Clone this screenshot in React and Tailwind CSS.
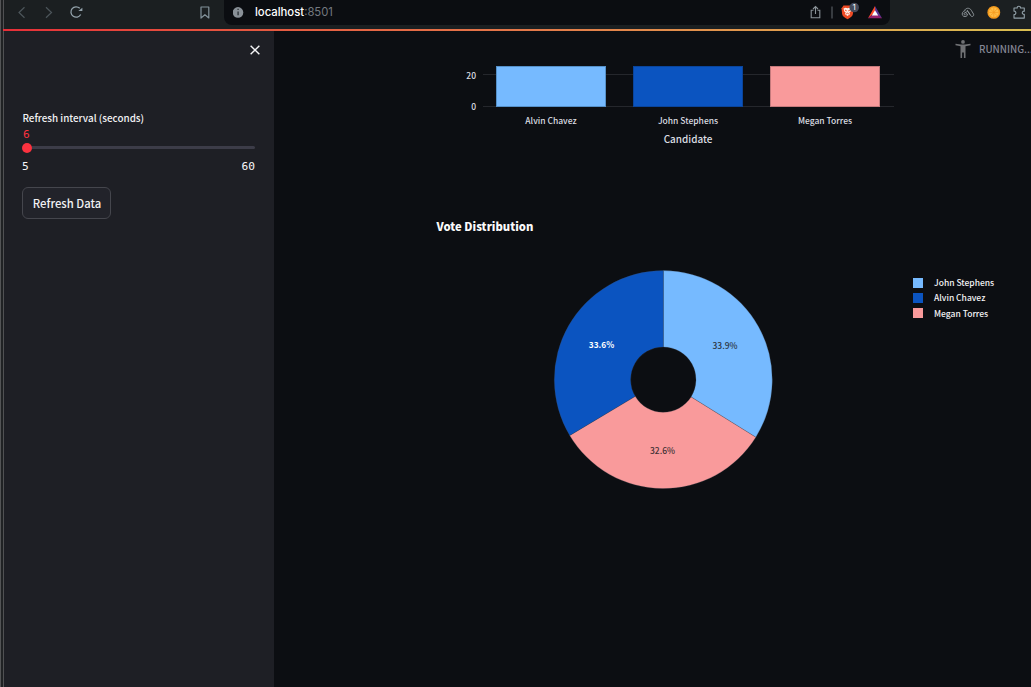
import React from "react";

const SANS = "font-['Noto_Sans_CJK_SC',sans-serif]";

const CANDIDATES = [
  { name: "Alvin Chavez", x: 66.5, fill: "#76baff", stroke: "#5590c8" },
  { name: "John Stephens", x: 203.5, fill: "#0b54c0", stroke: "#0a459c" },
  { name: "Megan Torres", x: 340.5, fill: "#f99a9b", stroke: "#c57a7c" },
];

const SLICES = [
  { label: "33.9%", value: 33.9, fill: "#76baff", text: "#2b3442", x: 725, y: 349 },
  { label: "32.6%", value: 32.6, fill: "#f99a9b", text: "#403034", x: 662.5, y: 454 },
  { label: "33.6%", value: 33.6, fill: "#0b54c0", text: "#ffffff", x: 601.5, y: 348.3, bold: true },
];

const LEGEND = [
  { name: "John Stephens", color: "bg-[#76baff]" },
  { name: "Alvin Chavez", color: "bg-[#0b54c0]" },
  { name: "Megan Torres", color: "bg-[#f99a9b]" },
];

function ringSlice(cx, cy, outer, inner, from, to) {
  const at = (r, a) => `${cx + r * Math.sin(a)} ${cy - r * Math.cos(a)}`;
  return `M${at(outer, from)} A${outer} ${outer} 0 0 1 ${at(outer, to)} L${at(inner, to)} A${inner} ${inner} 0 0 0 ${at(inner, from)} Z`;
}

function BrowserBar() {
  return (
    <div className="flex h-[29px] shrink-0 items-start bg-[#1b1f21] pl-[11px]">
      <svg className="h-[25px] w-[209px] shrink-0" viewBox="15 0 209 25" fill="none">
        <path d="M24.5 7.3 19 12.5l5.500 5.200M46 7.300l5.500 5.200L46 17.700" stroke="#4c555a" strokeWidth="1.200" />
        <path d="M79.800 8.300A5.200 5.200 0 1 0 80.700 14.500" stroke="#94a3ac" strokeWidth="1.300" />
        <path d="M78.300 10.900h4.100V7.700z" fill="#94a3ac" />
        <path d="M201 7h7.800v11l-3.900-3.300L201 18z" stroke="#82919a" strokeWidth="1.200" strokeLinejoin="round" />
      </svg>
      <div className="flex h-[25px] w-[666px] shrink-0 items-center rounded-b-lg bg-[#0b0d11] pl-[9px]">
        <svg className="h-[25px] w-[12px]" viewBox="0 0 12 25">
          <circle cx="5" cy="12.400" r="5.300" fill="#8a9198" />
          <path d="M5.100 11.500v3.800M5.100 8.800v1.300" stroke="#343a40" strokeWidth="1.500" />
        </svg>
        <div className="ml-[10px] font-[Inter,sans-serif] text-[11.3px] leading-[25px] text-[#747980]">
          <span className="font-medium text-white">localhost</span>:8501
        </div>
        <svg className="ml-auto h-[25px] w-[90px]" viewBox="800 0 90 25" fill="none">
          <path d="M813.500 10.300h-2.300v7.400h8.600v-7.400h-2.300M815.500 14V6.700M813 9l2.500-2.500L818 9" stroke="#8b9399" strokeWidth="1.100" />
          <path d="M832 6.500v12" stroke="#646a70" />
          <path d="m843.500 5.500-2 2.800.6 5.800c.3 2 2.200 3.400 5.400 5.200 3.200-1.800 5.100-3.200 5.400-5.200l.6-5.800-2-2.800z" fill="#ed4a24" />
          <path d="m843.500 8.500 2.200-.7 1.800.5 1.800-.5 2.200.7-.8 3-1.500 1.200 1 1.200-2.700 2.200-2.700-2.200 1-1.200-1.500-1.200z" fill="#fff0e9" />
          <path d="m845 10 1.700.9M850 10l-1.700.9M846.200 14l1.300-.8 1.300.8" stroke="#ed4a24" strokeWidth="1" />
          <circle cx="854.200" cy="7.500" r="4.800" fill="#454a59" />
          <text x="854.200" y="10.300" textAnchor="middle" fontSize="8" fill="#fff" fontFamily="Inter, sans-serif">1</text>
          <path d="M875 6v6l-3 3-4 3.300z" fill="#ff4c28" />
          <path d="m875 6 7 12.300-5-3.300-2-3z" fill="#5a3594" />
          <path d="m868 18.300 4-3.300h6l4 3.300z" fill="#96206f" />
          <path d="m875 10.200-3.200 5.300h6.400z" fill="#fff" />
        </svg>
      </div>
      <svg className="ml-auto h-[25px] w-[76px] shrink-0" viewBox="955 0 76 25" fill="none">
        <g stroke="#929a9e" strokeWidth=".9">
          <path d="M964.700 10.600c.6-2.800 4.900-3.300 6.600-.3l2.200 3.700c.9 1.900-1.300 3.400-2.700 1.800l-2.400-3.700c-1.100-1.400-3-.2-2.200 1.100l.9 1.500" />
          <path d="M967 9.900l3.100 4.900M967.400 13.800c.3 1.500-.7 2.800-2.300 2.800-2.200.1-3.600-2-2.600-4 .6-1.200 1.700-1.900 2.900-1.800M966 12.600c-1.400-.5-2.500.9-1.700 2 .4.500 1 .4 1.400 0" />
        </g>
        <circle cx="993.800" cy="12.400" r="6.400" fill="#f49a1d" />
        <circle cx="993.800" cy="12.400" r="4.900" fill="#ffbd45" />
        <path d="M993.800 7.500v9.800M988.900 12.400h9.800M990.400 9l6.800 6.800M997.200 9l-6.800 6.800" stroke="#f49a1d" strokeWidth=".7" />
        <path d="M1014 8h3.300c-.6-2.300 3.700-2.300 3.100 0h3.900v3.200c-2.700-.5-2.700 3.600 0 3.100v3.800H1014v-3.600c2.500.4 2.500-3.700 0-3.300z" stroke="#91a0a8" strokeWidth="1.100" strokeLinejoin="round" />
      </svg>
    </div>
  );
}

function Sidebar() {
  return (
    <aside className="flex w-[270px] shrink-0 flex-col bg-[#1e1f25] pl-[18px] pr-[19px]">
      <div className="-mr-[6px] flex h-[76px] justify-end pt-[13px]">
        <svg className="h-[12px] w-[12px]" viewBox="0 0 11 11" fill="none">
          <path d="m1.500 1.500 8 8M9.500 1.500l-8 8" stroke="#f4f4f6" strokeWidth="1.300" />
        </svg>
      </div>
      <div className="whitespace-nowrap pl-[0.5px] pt-[3px] text-[9.85px] font-medium leading-[16px] text-[#f1f1f3]">Refresh interval (seconds)</div>
      <div className="h-[16px] pl-px font-['DejaVu_Sans_Mono',monospace] text-[11.2px] leading-[18px] text-[#fb323f]">6</div>
      <div className="flex h-[11px] items-center">
        <div className="h-[10px] w-[10px] shrink-0 rounded-full bg-[#fb323f]" />
        <div className="h-[3px] grow rounded-r-sm bg-[#3c3c48]" />
      </div>
      <div className="flex h-[28px] items-center justify-between font-['DejaVu_Sans_Mono',monospace] text-[11.2px] text-[#f6f6f8]">
        <span>5</span>
        <span>60</span>
      </div>
      <button className="mt-[6px] flex h-[32px] w-[89px] items-center justify-center whitespace-nowrap rounded-[6px] border border-[#45464d] bg-[#22232a] pl-px pt-px text-[11.3px] font-medium leading-none text-[#f1f1f3]">
        Refresh Data
      </button>
    </aside>
  );
}

function BarChart() {
  return (
    <svg className="ml-[156px] h-[84px] w-[470px] shrink-0" viewBox="0 0 470 84">
      <path d="M53 8.500h411M53 40.500h411" stroke="#25272c" />
      <g fontSize="8.500" fontWeight="500" fill="#dcdee3">
        <text x="46" y="12.500" textAnchor="end">20</text>
        <text x="46" y="44" textAnchor="end">0</text>
        {CANDIDATES.map((c) => (
          <g key={c.name}>
            <rect x={c.x} y="0.500" width="109" height="40" fill={c.fill} stroke={c.stroke} />
            <text x={c.x + 54.5} y="57.500" textAnchor="middle">{c.name}</text>
          </g>
        ))}
      </g>
      <text x="258" y="77" textAnchor="middle" fontSize="9.950" fontWeight="500" fill="#dcdee3">Candidate</text>
    </svg>
  );
}

function DonutChart() {
  const total = SLICES.reduce((sum, s) => sum + s.value, 0);
  let start = 0;
  return (
    <svg className="h-[220px] w-[220px] shrink-0" viewBox="553 269 220 220">
      {SLICES.map((s) => {
        const end = start + (s.value / total) * 2 * Math.PI;
        const d = ringSlice(663.3, 379.6, 109, 32.7, start, end);
        start = end;
        return <path key={s.label} d={d} fill={s.fill} stroke="#444b56" strokeOpacity=".5" strokeWidth=".5" />;
      })}
      {SLICES.map((s) => (
        <text key={s.label} x={s.x} y={s.y} textAnchor="middle" fontSize={s.bold ? 8.3 : 8.5} fontWeight={s.bold ? 700 : 500} fill={s.text}>
          {s.label}
        </text>
      ))}
    </svg>
  );
}

function Dashboard() {
  return (
    <main className="flex min-w-0 grow flex-col bg-[#0c0e12]">
      <div className="flex h-[35px] shrink-0 items-center justify-end">
        <svg className="h-[18px] w-[16px] shrink-0" viewBox="0 0 16 18" fill="#707174">
          <circle cx="8" cy="1.900" r="1.900" />
          <path d="M.5 3.700 6 4.600h4l5.500-.9v1.600l-5 1V18H8.900v-5.500H7.100V18H5.500V6.300l-5-1z" />
        </svg>
        <div className="ml-[8px] w-[52px] whitespace-nowrap text-[9.8px] font-medium leading-[16px] text-[#858694]">RUNNING...</div>
      </div>
      <BarChart />
      <h2 className="ml-[162.5px] mt-[68px] h-[16px] whitespace-nowrap text-[11.25px] font-black leading-[16px] text-[#fafafa]">Vote Distribution</h2>
      <div className="mt-[35px] flex pl-[279px]">
        <DonutChart />
        <div className="ml-[140px] mt-[6px] flex flex-col">
          {LEGEND.map((item) => (
            <div key={item.name} className="flex h-[15.3px] items-center">
              <span className={`h-[10px] w-[10px] ${item.color}`} />
              <span className="ml-[11px] whitespace-nowrap text-[8.5px] font-medium leading-[15px] text-[#f4f4f6]">{item.name}</span>
            </div>
          ))}
        </div>
      </div>
    </main>
  );
}

export default function App() {
  return (
    <div className={`flex h-screen w-screen overflow-hidden bg-[#1b1f21] ${SANS}`}>
      <div className="w-[4px] shrink-0 border-l border-r border-l-[#535456] border-r-[#505153] bg-[#202224]" />
      <div className="flex min-w-0 grow flex-col">
        <BrowserBar />
        <div className="-ml-px h-[2px] shrink-0 bg-linear-to-r from-[#e62e38] via-[#e47749] to-[#d9be51]" />
        <div className="flex min-h-0 grow">
          <Sidebar />
          <Dashboard />
        </div>
      </div>
    </div>
  );
}
